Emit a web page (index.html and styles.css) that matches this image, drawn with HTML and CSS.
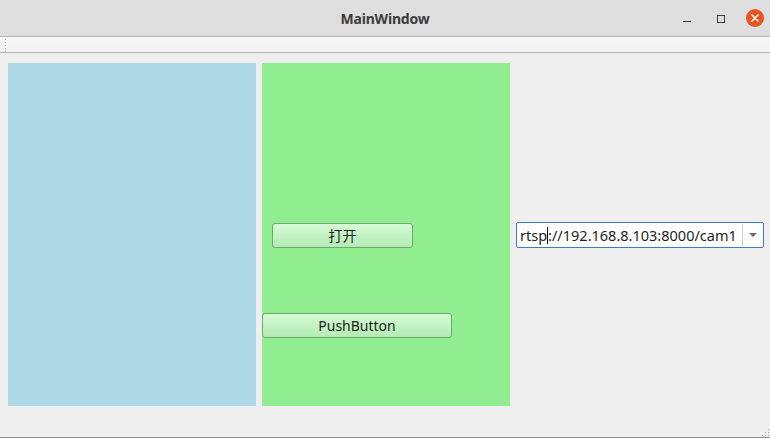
FILE: index.html
```html
<!DOCTYPE html>
<html>
<head>
<meta charset="utf-8">
<link rel="stylesheet" href="styles.css">
</head>
<body>
<div class="window">
  <div class="titlebar">
    <div class="title">MainWindow</div>
    <div class="controls">
      <span class="ctl min"></span>
      <span class="ctl max"></span>
      <span class="ctl close">
        <svg width="18" height="18" viewBox="0 0 18 18"><circle cx="9" cy="9" r="9" fill="#e95420"/><path d="M5.8 5.8 L12.2 12.2 M12.2 5.8 L5.8 12.2" stroke="#fff" stroke-width="1.5" stroke-linecap="round"/></svg>
      </span>
    </div>
  </div>
  <div class="toolbar"><span class="grip"></span></div>
  <div class="central">
    <div class="panel blue"></div>
    <div class="panel green">
      <button class="btn open">打开</button>
      <button class="btn push">PushButton</button>
    </div>
    <div class="combo">
      <span class="combo-text">rtsp<span class="caret"></span>://192.168.8.103:8000/cam1</span>
      <span class="combo-arrow"><svg width="10" height="6" viewBox="0 0 10 6"><path d="M1 1 L9 1 L5 5 Z" fill="#6a6a6a"/></svg></span>
    </div>
  </div>
  <div class="statusbar"><span class="sizegrip"></span></div>
</div>
</body>
</html>
```
FILE: styles.css
```css
html, body {
  margin: 0;
  padding: 0;
  background: #efefef;
}
.window {
  width: 770px;
  height: 438px;
  display: flex;
  flex-direction: column;
  font-family: "Noto Sans", "Noto Sans CJK SC", sans-serif;
  overflow: hidden;
}
.titlebar {
  height: 36px;
  background: #dedede;
  border-bottom: 1px solid #b5b5b5;
  position: relative;
  display: flex;
  align-items: center;
  justify-content: center;
  box-sizing: content-box;
}
.title {
  font-family: "Noto Sans", sans-serif;
  font-weight: bold;
  font-size: 14px;
  color: #3c3c3c;
  letter-spacing: -0.2px;
}
.controls {
  position: absolute;
  right: 6px;
  top: 9px;
  display: flex;
  align-items: center;
}
.ctl {
  display: block;
  width: 34px;
  height: 18px;
  position: relative;
}
.min::after {
  content: "";
  position: absolute;
  left: 5px;
  top: 12px;
  width: 8px;
  height: 1px;
  background: #3c3c3c;
}
.max::after {
  content: "";
  position: absolute;
  left: 5px;
  top: 6px;
  width: 6px;
  height: 6px;
  border: 1px solid #3c3c3c;
}
.close {
  width: 18px;
}
.close svg { display: block; }
.toolbar {
  height: 15px;
  background: linear-gradient(#f8f8f8, #f1f1f1);
  border-bottom: 1px solid #b5b5b5;
  position: relative;
}
.grip {
  position: absolute;
  left: 4px;
  top: 1px;
  width: 4px;
  height: 14px;
  background-image: radial-gradient(circle, #b0b0b0 0.7px, transparent 0.8px);
  background-size: 3px 3px;
}
.central {
  flex: 1;
  display: flex;
  align-items: flex-start;
  gap: 6px;
  padding: 10px 0 0 8px;
}
.panel {
  width: 248px;
  height: 343px;
}
.blue { background: #add8e6; }
.green {
  background: #90ee90;
  display: flex;
  flex-direction: column;
  align-items: flex-start;
  padding-top: 160px;
  box-sizing: border-box;
}
.btn {
  font-family: "Noto Sans", "Noto Sans CJK SC", sans-serif;
  font-size: 14px;
  color: #1e1e1e;
  height: 25px;
  padding: 0;
  border: 1px solid #6fa86f;
  border-radius: 3px;
  background: linear-gradient(#d6fbd6, #b4ebb4);
  line-height: 22px;
}
.open {
  width: 141px;
  margin-left: 10px;
}
.push {
  width: 190px;
  margin-top: 65px;
}
.combo {
  margin-top: 159px;
  width: 248px;
  height: 26px;
  box-sizing: border-box;
  background: #fff;
  border: 1px solid #3d7bc7;
  border-radius: 2px;
  display: flex;
  align-items: center;
}
.combo-text {
  flex: 1;
  font-size: 14.5px;
  color: #1e1e1e;
  padding-left: 3px;
  white-space: nowrap;
  letter-spacing: 0;
}
.caret {
  display: inline-block;
  width: 1px;
  height: 17px;
  background: #000;
  vertical-align: -3px;
}
.combo-arrow {
  width: 20px;
  height: 22px;
  border-left: 1px solid #cfcfcf;
  display: flex;
  align-items: center;
  justify-content: center;
}
.statusbar {
  height: 31px;
  border-bottom: 1px solid #8c8c8c;
  position: relative;
}
.sizegrip {
  position: absolute;
  right: 1px;
  bottom: 1px;
  width: 8px;
  height: 8px;
  background-image: radial-gradient(circle, #a0a0a0 0.7px, transparent 0.8px);
  background-size: 3px 3px;
  clip-path: polygon(100% 0, 100% 100%, 0 100%);
}
```
